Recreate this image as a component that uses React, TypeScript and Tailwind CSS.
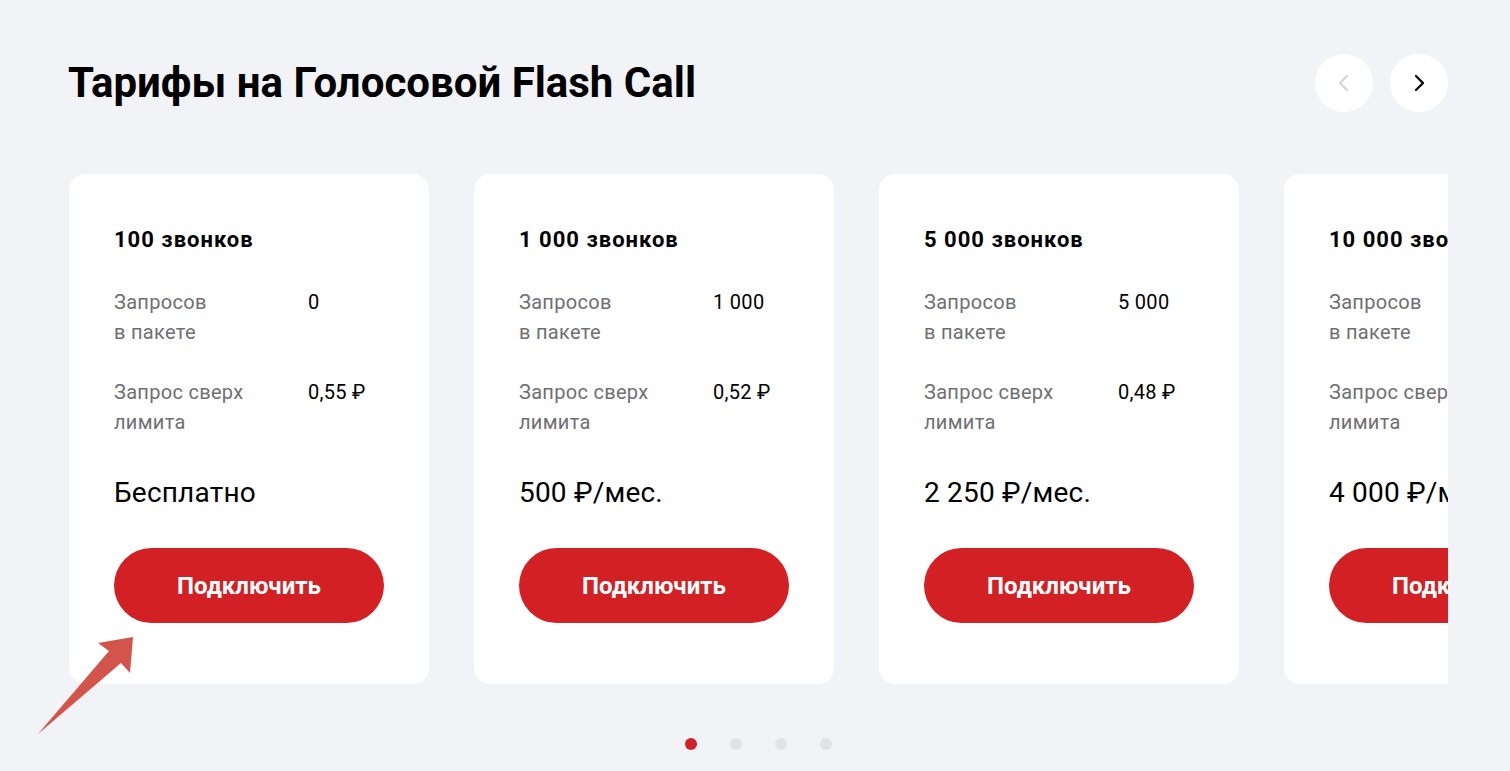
import React from "react";

const plans = [
  { title: "100 звонков", req: "0", over: "0,55 ₽", price: "Бесплатно" },
  { title: "1 000 звонков", req: "1 000", over: "0,52 ₽", price: "500 ₽/мес." },
  { title: "5 000 звонков", req: "5 000", over: "0,48 ₽", price: "2 250 ₽/мес." },
  { title: "10 000 звонков", req: "10 000", over: "0,40 ₽", price: "4 000 ₽/мес." },
];

function Card({ p }: { p: (typeof plans)[number] }) {
  return (
    <div className="shrink-0 w-[360px] h-[510px] bg-white rounded-[16px] pl-[45px] pr-[45px] pt-[54px] flex flex-col">
      <div className="text-[22px] leading-[24px] font-bold tracking-[1px] text-black whitespace-nowrap">{p.title}</div>
      <div className="grid grid-cols-[194px_1fr] mt-[35px] text-[20px] leading-[30px] tracking-[0.3px]">
        <div className="text-[#6f6f73] whitespace-nowrap">Запросов<br />в пакете</div>
        <div className="text-black whitespace-nowrap">{p.req}</div>
      </div>
      <div className="grid grid-cols-[194px_1fr] mt-[30px] text-[20px] leading-[30px] tracking-[0.3px]">
        <div className="text-[#6f6f73] whitespace-nowrap">Запрос сверх<br />лимита</div>
        <div className="text-black whitespace-nowrap">{p.over}</div>
      </div>
      <div className="mt-[39px] text-[28px] leading-[34px] tracking-[0.2px] text-black whitespace-nowrap">{p.price}</div>
      <button className="mt-[38px] w-[270px] h-[75px] shrink-0 rounded-full bg-[#d22024] text-white text-[24px] font-bold">
        Подключить
      </button>
    </div>
  );
}

export default function App() {
  return (
    <div className="relative w-[1510px] h-[771px] bg-[#f2f3f7] overflow-hidden" style={{ fontFamily: "Roboto, 'Noto Sans', sans-serif" }}>
      <div className="ml-[68px] w-[1380px] pt-[54px]">
        <div className="flex items-center justify-between h-[58px]">
          <h1 className="text-[42px] leading-[48px] font-bold text-black">Тарифы на Голосовой Flash Call</h1>
          <div className="flex gap-[17px]">
            <button className="w-[58px] h-[58px] rounded-full bg-white flex items-center justify-center">
              <svg width="20" height="20" viewBox="0 0 20 20" fill="none" stroke="#d4d4d8" strokeWidth="2.2" strokeLinecap="round" strokeLinejoin="round">
                <path d="M13 3 L6 10 L13 17" />
              </svg>
            </button>
            <button className="w-[58px] h-[58px] rounded-full bg-white flex items-center justify-center">
              <svg width="20" height="20" viewBox="0 0 20 20" fill="none" stroke="#000" strokeWidth="2.2" strokeLinecap="round" strokeLinejoin="round">
                <path d="M7 3 L14 10 L7 17" />
              </svg>
            </button>
          </div>
        </div>
        <div className="mt-[62px] ml-[1px] overflow-hidden w-[1379px]">
          <div className="flex gap-[45px]">
            {plans.map((p) => (
              <Card key={p.title} p={p} />
            ))}
          </div>
        </div>
        <div className="mt-[54px] flex justify-center gap-[33px]">
          <span className="w-[12px] h-[12px] rounded-full bg-[#d22024]" />
          <span className="w-[12px] h-[12px] rounded-full bg-[#e1e2e6]" />
          <span className="w-[12px] h-[12px] rounded-full bg-[#e1e2e6]" />
          <span className="w-[12px] h-[12px] rounded-full bg-[#e1e2e6]" />
        </div>
      </div>
      <svg className="absolute left-0 top-0 pointer-events-none" width="1510" height="771">
        <path d="M38 734 L109 651 L98 643 L133 637 L130 673 L121 663 Z" fill="#d3544a" />
      </svg>
    </div>
  );
}
